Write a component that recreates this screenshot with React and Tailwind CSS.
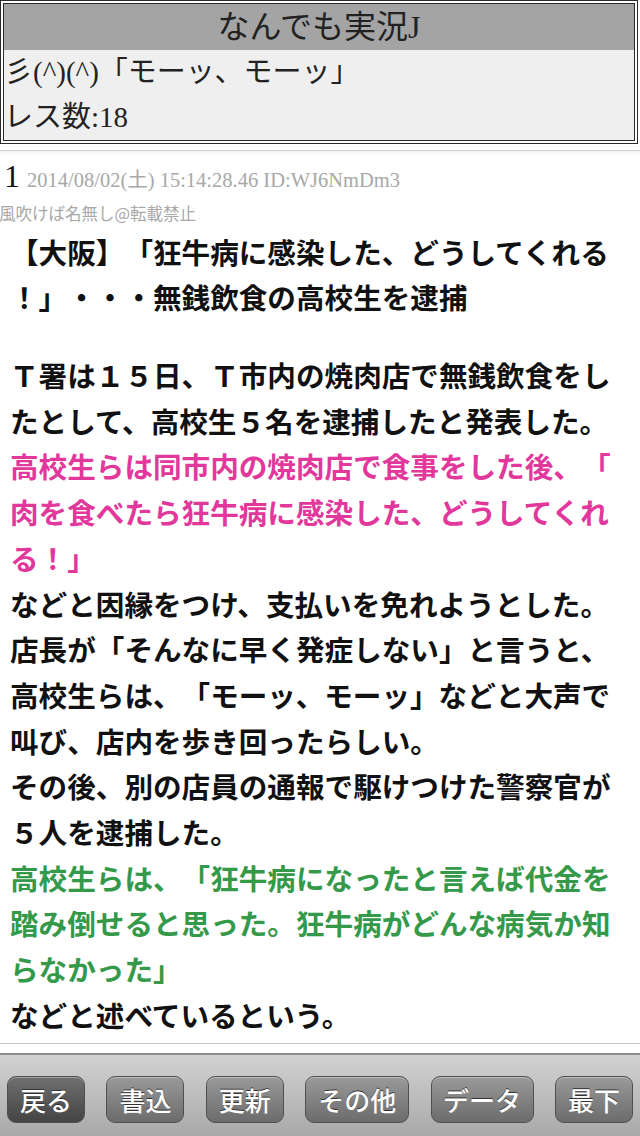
const serif = "font-['Liberation_Serif','Noto_Sans_CJK_JP',serif]";
const gothic = "font-['Noto_Sans_CJK_JP',sans-serif]";

const BLACK = 'text-[#111]';
const PINK = 'text-[#e2379b]';
const GREEN = 'text-[#35994a]';

const heading = [
  '【大阪】「狂牛病に感染した、どうしてくれる',
  '！」・・・無銭飲食の高校生を逮捕',
];

const body = [
  ['Ｔ署は１５日、Ｔ市内の焼肉店で無銭飲食をし', BLACK],
  ['たとして、高校生５名を逮捕したと発表した。', BLACK],
  ['高校生らは同市内の焼肉店で食事をした後、「', PINK],
  ['肉を食べたら狂牛病に感染した、どうしてくれ', PINK],
  ['る！」', PINK],
  ['などと因縁をつけ、支払いを免れようとした。', BLACK],
  ['店長が「そんなに早く発症しない」と言うと、', BLACK],
  ['高校生らは、「モーッ、モーッ」などと大声で', BLACK],
  ['叫び、店内を歩き回ったらしい。', BLACK],
  ['その後、別の店員の通報で駆けつけた警察官が', BLACK],
  ['５人を逮捕した。', BLACK],
  ['高校生らは、「狂牛病になったと言えば代金を', GREEN],
  ['踏み倒せると思った。狂牛病がどんな病気か知', GREEN],
  ['らなかった」', GREEN],
  ['などと述べているという。', BLACK],
];

const buttons = [
  { label: '戻る', w: 'w-[78px]', dark: true },
  { label: '書込', w: 'w-[78px]' },
  { label: '更新', w: 'w-[78px]' },
  { label: 'その他', w: 'w-[104px]' },
  { label: 'データ', w: 'w-[103px]' },
  { label: '最下', w: 'w-[78px]' },
];

function ToolButton({ label, w, dark }) {
  return (
    <div
      className={`${w} h-[47px] rounded-[9px] border border-[#4f4f4f] flex items-center justify-center shadow-[inset_0_1px_0_rgba(255,255,255,0.35)] ${
        dark ? 'bg-linear-to-b from-[#707070] to-[#444]' : 'bg-linear-to-b from-[#9a9a9a] to-[#6c6c6c]'
      }`}
    >
      <span className={`${gothic} text-[26px] font-medium text-white leading-none [text-shadow:0_-1px_0_#333]`}>
        {label}
      </span>
    </div>
  );
}

export default function App() {
  return (
    <div className="w-[640px] h-[1136px] bg-white flex flex-col overflow-hidden [text-spacing-trim:space-all]">
      {/* thread header */}
      <div className="w-[638px] border border-[#2a2a2a] p-[2px] bg-white">
        <div className="border border-[#2a2a2a]">
          <div className={`h-[46px] bg-[#a4a4a4] flex items-center justify-center ${serif} text-[32px] text-[#222]`}>
            なんでも実況J
          </div>
          <div className={`bg-[#efefef] ${serif} text-[29px] text-[#222]`}>
            <div className="h-[46px] flex items-center">彡(^)(^)「モーッ、モーッ」</div>
            <div className="h-[44px] flex items-center">レス数:18</div>
          </div>
        </div>
      </div>

      <div className="mt-[6px] h-[6px] border-t border-[#cfcfcf] bg-linear-to-b from-[#f2f2f2] to-white" />

      {/* post */}
      <div className="flex-1 flex flex-col">
        <div className={`${serif} flex items-baseline pl-[4px] h-[32px] mt-[4px]`}>
          <span className="text-[32px] text-[#111] leading-none">1</span>
          <span className="ml-[7px] text-[20.5px] text-[#a8a8a8] leading-none">
            2014/08/02(土) 15:14:28.46 ID:WJ6NmDm3
          </span>
        </div>
        <div className={`${gothic} text-[16.5px] text-[#a8a8a8] leading-[22px] mt-[10px] -ml-[1px]`}>
          風吹けば名無し@転載禁止
        </div>

        <div className={`${gothic} font-bold text-[28.6px] pl-[10px] mt-[5px] whitespace-nowrap`}>
          {heading.map((l, i) => (
            <div key={i} className="leading-[45px] text-[#111]">{l}</div>
          ))}
          <div className="mt-[33px]">
            {body.map(([l, c], i) => (
              <div key={i} className={`leading-[45.7px] ${c}`}>{l}</div>
            ))}
          </div>
        </div>
      </div>

      {/* bottom toolbar */}
      <div className="border-t border-[#c4c4c4] h-[10px] bg-white" />
      <div className="h-[83px] border-t-2 border-[#8c8c8c] bg-linear-to-b from-[#d2d2d2] to-[#a9a9a9] flex justify-between px-[7px] pt-[21px]">
        {buttons.map(b => (
          <ToolButton key={b.label} {...b} />
        ))}
      </div>
    </div>
  );
}
